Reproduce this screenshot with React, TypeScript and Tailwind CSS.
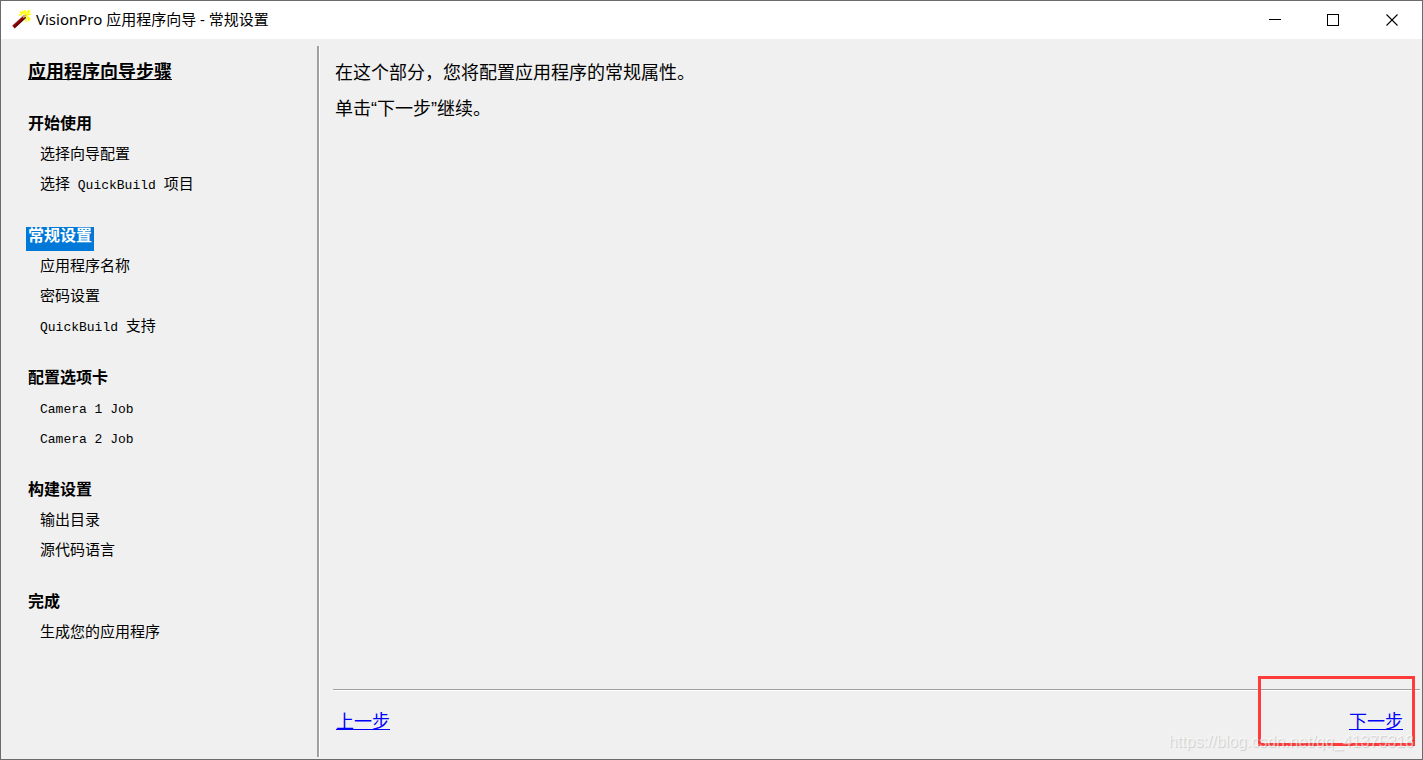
import { FC } from "react";

interface Step {
  cjk: string;
  latin?: string;
  tail?: string;
}

interface StepGroup {
  title: string;
  steps: Step[];
}

const groups: StepGroup[] = [
  {
    title: "开始使用",
    steps: [
      { cjk: "选择向导配置" },
      { cjk: "选择", latin: " QuickBuild ", tail: "项目" },
    ],
  },
  {
    title: "常规设置",
    steps: [
      { cjk: "应用程序名称" },
      { cjk: "密码设置" },
      { cjk: "", latin: "QuickBuild ", tail: "支持" },
    ],
  },
  {
    title: "配置选项卡",
    steps: [
      { cjk: "", latin: "Camera 1 Job" },
      { cjk: "", latin: "Camera 2 Job" },
    ],
  },
  {
    title: "构建设置",
    steps: [{ cjk: "输出目录" }, { cjk: "源代码语言" }],
  },
  {
    title: "完成",
    steps: [{ cjk: "生成您的应用程序" }],
  },
];

const WandIcon: FC = () => (
  <svg width="20" height="20" viewBox="0 0 20 20" aria-hidden="true">
    <g stroke="#ffff00" strokeWidth="1.6">
      <path d="M13 0v3M8 2l3 2M17 0l-2 3M19 4l-4 1M18 10l-3-3M14 12V8M7 5h3M17 11l-1-3" />
      <path d="M10 1l8 8M18 1l-6 6" />
    </g>
    <path d="M1.5 17L13 6.5" stroke="#a08070" strokeWidth="4" />
    <path d="M1.5 17L13 6.5" stroke="#8b0000" strokeWidth="3" />
    <path d="M2.5 17.8L13.5 7.6" stroke="#4a0000" strokeWidth="1" />
    <path d="M11 7.6l3-2.7" stroke="#d8b070" strokeWidth="2" />
  </svg>
);

const TitleBar: FC = () => (
  <header className="flex h-[38px] shrink-0 items-center justify-between bg-white">
    <div className="flex items-center gap-1 pl-[11px]">
      <WandIcon />
      <h1 className="pb-0.5 font-['Noto_Sans','Noto_Sans_CJK_SC',sans-serif] text-[15px] leading-5">
        VisionPro 应用程序向导 - 常规设置
      </h1>
    </div>
    <div className="flex h-full">
      <button aria-label="最小化" className="flex w-[59px] items-center justify-center">
        <svg width="12" height="12" shapeRendering="crispEdges">
          <path d="M0 5.5h12" stroke="#000" />
        </svg>
      </button>
      <button aria-label="最大化" className="flex w-[58px] items-center justify-center">
        <svg width="12" height="12" shapeRendering="crispEdges">
          <rect x="0.5" y="0.5" width="11" height="11" fill="none" stroke="#000" />
        </svg>
      </button>
      <button aria-label="关闭" className="flex w-[60px] items-center justify-center">
        <svg width="12" height="12">
          <path d="M0.5 0.5l11 11M11.5 0.5l-11 11" stroke="#000" strokeWidth="1.1" />
        </svg>
      </button>
    </div>
  </header>
);

const Sidebar: FC<{ current: string }> = ({ current }) => (
  <nav className="w-[316px] shrink-0 pt-[18px] pl-[27px]">
    <h2 className="mb-[22px] text-lg leading-[30px] font-bold underline decoration-1 underline-offset-1">
      应用程序向导步骤
    </h2>
    <ol className="flex flex-col gap-[22px]">
      {groups.map((group) => (
        <li key={group.title}>
          <h3 className="flex h-[30px] items-end text-base font-bold">
            {group.title === current ? (
              <span className="-ml-0.5 h-6 bg-[#0078d7] px-0.5 leading-[18px] text-white">
                {group.title}
              </span>
            ) : (
              <span className="leading-[30px]">{group.title}</span>
            )}
          </h3>
          <ol className="pl-3 text-[15px]">
            {group.steps.map((step) => (
              <li key={step.cjk + step.latin} className="h-[30px] leading-[30px] whitespace-pre">
                {step.cjk}
                {step.latin && (
                  <span className="font-['Liberation_Mono',monospace] text-[13px]">
                    {step.latin}
                  </span>
                )}
                {step.tail}
              </li>
            ))}
          </ol>
        </li>
      ))}
    </ol>
  </nav>
);

const App: FC = () => {
  return (
    <div className="relative flex h-screen flex-col overflow-hidden border border-[#6b6b6b] bg-[#f0f0f0] font-['Liberation_Sans','Noto_Sans_CJK_SC',sans-serif] text-black">
      <TitleBar />
      <div className="flex min-h-0 flex-1">
        <Sidebar current="常规设置" />
        <div className="mt-[7px] mb-0.5 w-[3px] shrink-0 border-r border-white bg-[#a0a0a0]" />
        <main className="flex min-w-0 flex-1 flex-col pl-[13px]">
          <div className="flex-1 pt-4 pl-0.5 text-lg leading-9">
            <p>在这个部分，您将配置应用程序的常规属性。</p>
            <p>单击“下一步”继续。</p>
          </div>
          <footer className="mr-0.5 flex h-[70px] shrink-0 items-center justify-between border-t border-[#a0a0a0] pr-[17px] pb-1.5 pl-[3px] text-lg leading-6 text-[#0000ff] shadow-[inset_0_1px_0_#fff]">
            <a href="#prev" className="underline decoration-1 underline-offset-1">
              上一步
            </a>
            <a href="#next" className="underline decoration-1 underline-offset-1">
              下一步
            </a>
          </footer>
        </main>
      </div>
      <div className="pointer-events-none absolute right-[7px] bottom-[13px] h-[70px] w-[157px] border-3 border-[#ff3b3b]" />
      <span className="pointer-events-none absolute right-2 bottom-[7px] text-base leading-5 text-white/60 [text-shadow:1px_1px_1px_rgb(0_0_0/0.15)]">
        https://blog.csdn.net/qq_41375318
      </span>
    </div>
  );
};

export default App;
